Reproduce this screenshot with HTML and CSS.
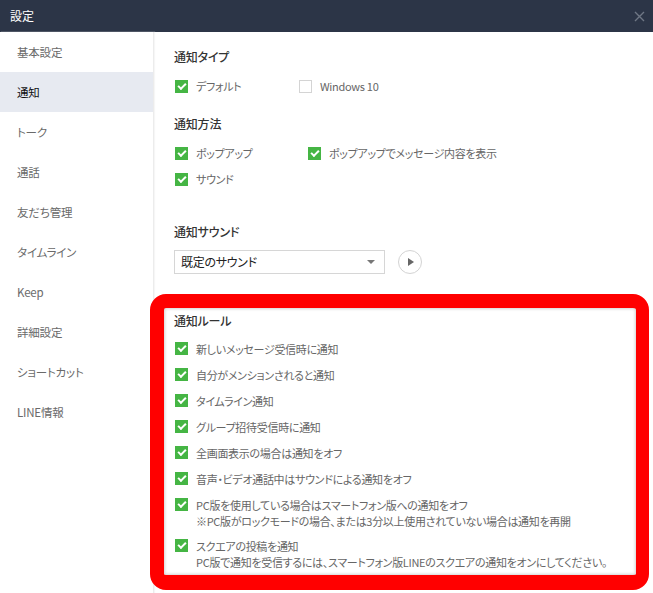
FILE: index.html
```html
<!DOCTYPE html>
<html lang="ja">
<head>
<meta charset="utf-8">
<title>設定</title>
<link rel="stylesheet" href="styles.css">
</head>
<body>
<div class="window">
  <header class="titlebar">
    <span class="title">設定</span>
    <span class="close">
      <svg width="11" height="11" viewBox="0 0 11 11"><path d="M1 1L10 10M10 1L1 10" stroke="#6f7785" stroke-width="1.4" fill="none"/></svg>
    </span>
  </header>
  <div class="main">
    <nav class="sidebar">
      <div class="nav-item">基本設定</div>
      <div class="nav-item active">通知</div>
      <div class="nav-item">トーク</div>
      <div class="nav-item">通話</div>
      <div class="nav-item">友だち管理</div>
      <div class="nav-item">タイムライン</div>
      <div class="nav-item">Keep</div>
      <div class="nav-item">詳細設定</div>
      <div class="nav-item">ショートカット</div>
      <div class="nav-item">LINE情報</div>
    </nav>
    <section class="content">
      <h2 class="heading h-type">通知タイプ</h2>
      <div class="row-line first">
        <label class="opt"><span class="cb on"></span>デフォルト</label>
        <label class="opt opt-win"><span class="cb"></span>Windows 10</label>
      </div>

      <h2 class="heading h-method">通知方法</h2>
      <div class="row-line first">
        <label class="opt opt-popup"><span class="cb on"></span>ポップアップ</label>
        <label class="opt"><span class="cb on"></span>ポップアップでメッセージ内容を表示</label>
      </div>
      <div class="row-line">
        <label class="opt"><span class="cb on"></span>サウンド</label>
      </div>

      <h2 class="heading h-sound">通知サウンド</h2>
      <div class="sound-row">
        <div class="select">
          <span>既定のサウンド</span>
          <span class="caret"></span>
        </div>
        <div class="play"><span class="tri"></span></div>
      </div>

      <div class="rules">
        <h2 class="heading h-rules">通知ルール</h2>
        <ul class="rule-list">
          <li><span class="cb on"></span><div>新しいメッセージ受信時に通知</div></li>
          <li><span class="cb on"></span><div>自分がメンションされると通知</div></li>
          <li><span class="cb on"></span><div>タイムライン通知</div></li>
          <li><span class="cb on"></span><div>グループ招待受信時に通知</div></li>
          <li><span class="cb on"></span><div>全画面表示の場合は通知をオフ</div></li>
          <li><span class="cb on"></span><div>音声・ビデオ通話中はサウンドによる通知をオフ</div></li>
          <li><span class="cb on"></span><div>PC版を使用している場合はスマートフォン版への通知をオフ<br>※PC版がロックモードの場合、または3分以上使用されていない場合は通知を再開</div></li>
          <li><span class="cb on"></span><div>スクエアの投稿を通知<br>PC版で通知を受信するには、スマートフォン版LINEのスクエアの通知をオンにしてください。</div></li>
        </ul>
      </div>
    </section>
  </div>
</div>
</body>
</html>
```

FILE: styles.css
```css
* { box-sizing: border-box; }
html, body {
  margin: 0;
  padding: 0;
  background: #fff;
}
body {
  font-family: "Noto Sans CJK JP", "Noto Sans", sans-serif;
  font-size: 11px;
  line-height: 16px;
  letter-spacing: -0.3px;
  color: #666;
  font-feature-settings: "palt";
}
.window {
  width: 653px;
  height: 593px;
  overflow: hidden;
  display: flex;
  flex-direction: column;
}
.titlebar {
  height: 32px;
  background: #2c3547;
  display: flex;
  align-items: center;
  justify-content: space-between;
  padding: 0 8px 0 10px;
  flex: none;
}
.title {
  color: #fff;
  font-size: 12px;
  letter-spacing: 0;
}
.close {
  display: flex;
  width: 11px;
  height: 11px;
}
.main {
  flex: 1;
  display: flex;
}
.sidebar {
  width: 154px;
  flex: none;
  border-right: 1px solid #ececec;
  box-shadow: 1px 0 1px #f6f6f6;
}
.nav-item {
  height: 40px;
  display: flex;
  align-items: center;
  padding-left: 17px;
  font-size: 11.5px;
  letter-spacing: -0.2px;
  color: #6a6a6a;
}
.nav-item.active {
  background: #e7eaf1;
  color: #111;
}
.content {
  flex: 1;
  padding: 17px 0 0 20px;
}
.heading {
  margin: 0;
  font-size: 12px;
  font-weight: 500;
  line-height: 16px;
  letter-spacing: -0.2px;
  color: #333;
}
.h-method { margin-top: 22px; }
.h-sound { margin-top: 37px; }
.row-line {
  display: flex;
  margin-top: 10px;
}
.row-line.first { margin-top: 13px; }
.opt {
  display: flex;
  align-items: center;
  height: 16px;
}
.opt:first-child { width: 124px; }
.opt-popup { width: 133px !important; }
.cb {
  width: 13px;
  height: 13px;
  flex: none;
  margin: 0 8px 0 1px;
  border: 1px solid #d4d4d4;
  background: #fff;
  position: relative;
}
.cb.on {
  border: none;
  background: #45b544;
}
.cb.on::after {
  content: "";
  position: absolute;
  left: 3px;
  top: 3px;
  width: 6px;
  height: 3px;
  border-left: 2px solid #fff;
  border-bottom: 2px solid #fff;
  transform: rotate(-45deg);
}
.sound-row {
  display: flex;
  align-items: center;
  margin-top: 10px;
  gap: 13px;
}
.select {
  width: 211px;
  height: 24px;
  border: 1px solid #d6d6d6;
  display: flex;
  align-items: center;
  justify-content: space-between;
  padding: 0 9px 0 6px;
  font-size: 12px;
  color: #222;
}
.caret {
  width: 0;
  height: 0;
  border-left: 4px solid transparent;
  border-right: 4px solid transparent;
  border-top: 4px solid #777;
}
.play {
  width: 24px;
  height: 24px;
  border: 1px solid #d3d3d3;
  border-radius: 50%;
  display: flex;
  align-items: center;
  justify-content: center;
}
.tri {
  width: 0;
  height: 0;
  border-top: 4px solid transparent;
  border-bottom: 4px solid transparent;
  border-left: 6px solid #666;
  margin-left: 2px;
}
.rules {
  margin: 20px 4px 0 -24px;
  border-style: solid;
  border-color: #ff0000;
  border-width: 14px 13px 15px 14px;
  border-radius: 16px;
  padding: 5px 0 5px 10px;
  box-shadow: inset 0 0 3px 1px rgba(0,0,0,0.18);
}
.rule-list {
  list-style: none;
  margin: 12px 0 0;
  padding: 0;
}
.rule-list li {
  display: flex;
  align-items: flex-start;
  margin-top: 10px;
}
.rule-list li:first-child { margin-top: 0; }
.rule-list li .cb { margin-top: 1px; }
.rule-list li:nth-child(8) { margin-top: 9px; }
```
